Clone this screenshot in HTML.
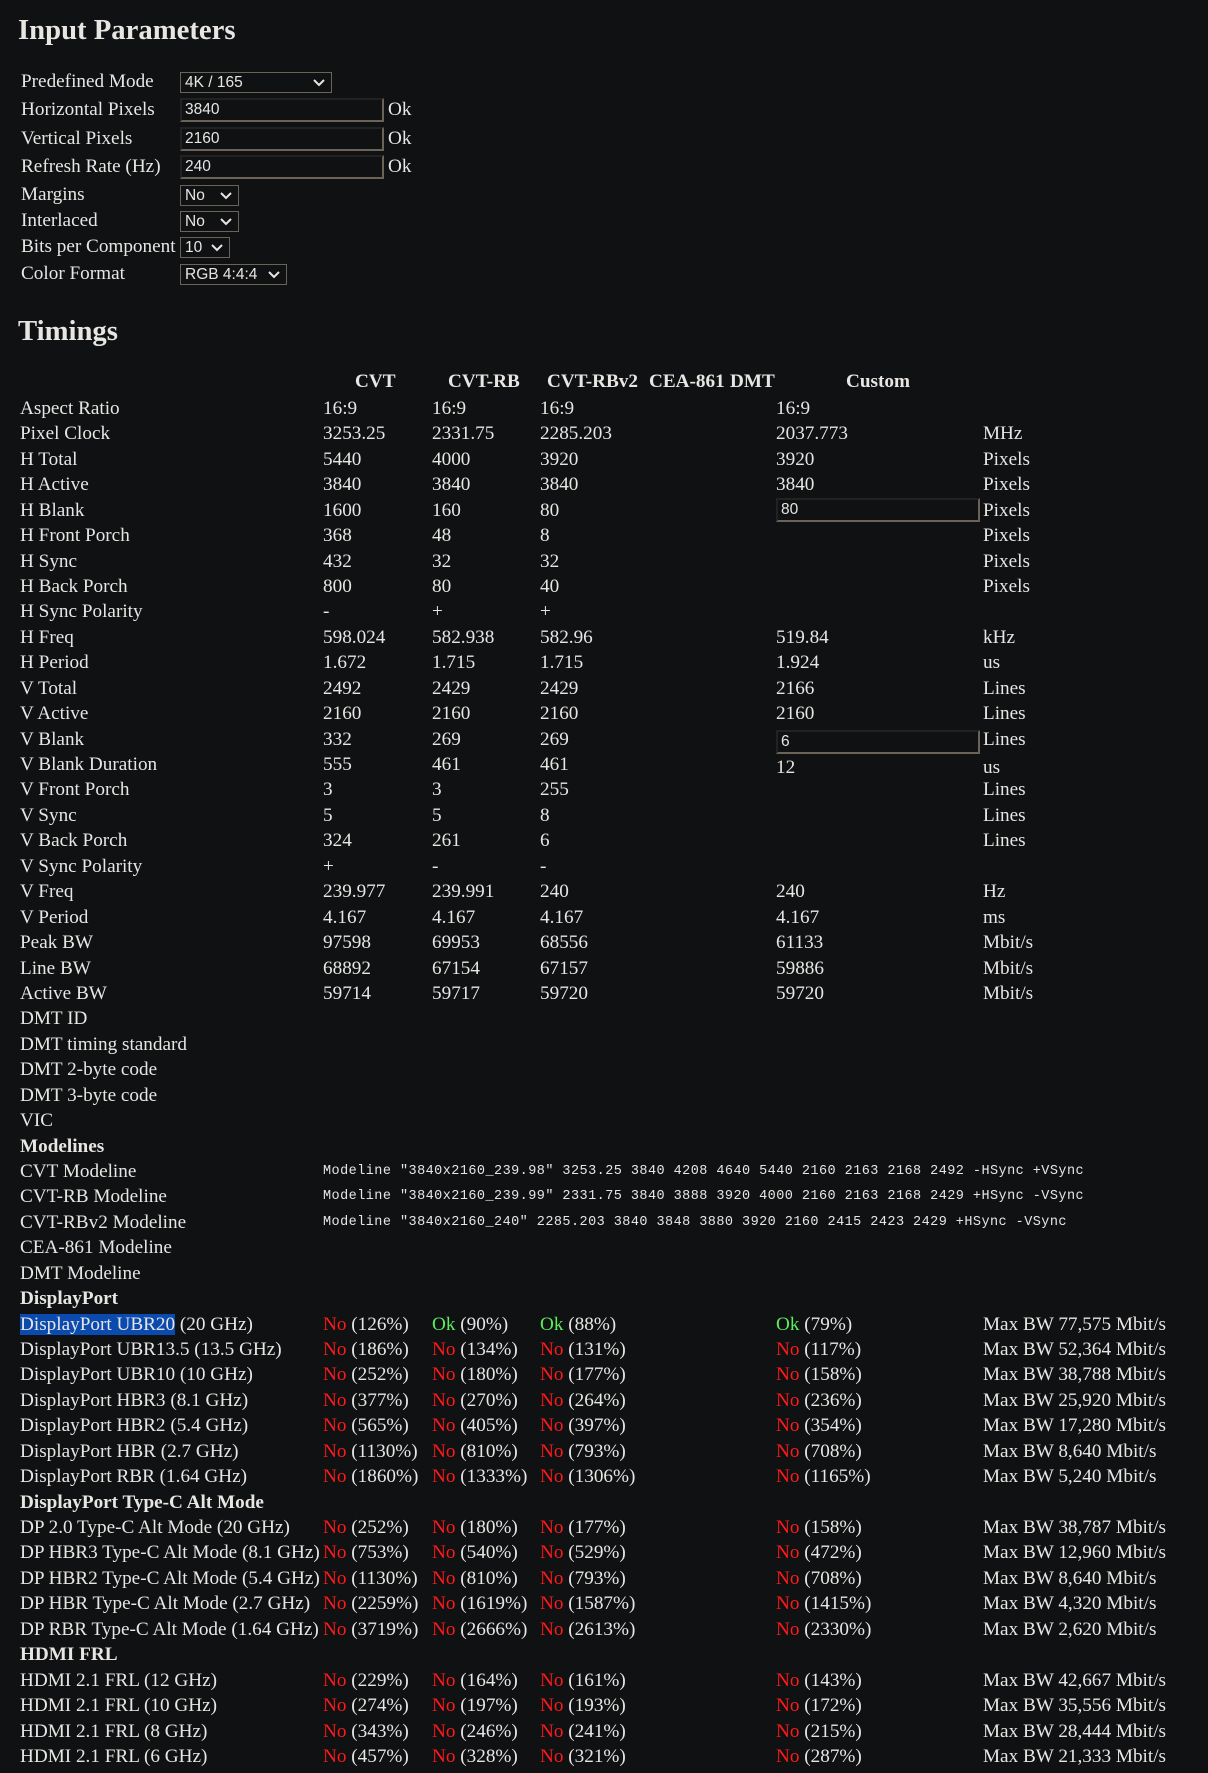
<!DOCTYPE html>
<html><head><meta charset="utf-8"><style>
html,body{margin:0;padding:0;background:#0f1113;}
body{width:1208px;height:1773px;position:relative;overflow:hidden;color:#e8e6e3;font-family:"Liberation Serif",serif;font-size:19.2px;}
.a{position:absolute;white-space:nowrap;line-height:24px;height:24px;}
h1{position:absolute;margin:0;font-size:28.7px;font-weight:bold;line-height:34px;white-space:nowrap;}
.sel{position:absolute;border:1px solid #6b6358;box-sizing:border-box;height:21px;font-family:"Liberation Sans",sans-serif;font-size:15.5px;line-height:19px;padding-left:4px;}
.sel svg{position:absolute;right:6px;top:6px;}
.inp{position:absolute;box-sizing:border-box;height:24px;border:2px solid;border-color:#222 #6b6358 #6b6358 #222;font-family:"Liberation Sans",sans-serif;font-size:15.5px;line-height:20px;padding-left:3px;}
.mono{font-family:"Liberation Mono",monospace;font-size:13.5px;letter-spacing:0.45px;}
.r{color:#ff1a1a}.g{color:#5bef5b}
b{font-weight:bold}
.hl{background:#0b4bb0}
</style></head><body>
<h1 style="left:18px;top:13px">Input Parameters</h1>
<div class="a" style="left:21px;top:70px">Predefined Mode</div>
<div class="sel" style="left:180px;top:72px;width:152px">4K / 165<svg width="12" height="8"><path d="M1 1l5 5 5-5" fill="none" stroke="#e8e6e3" stroke-width="2"/></svg></div>
<div class="a" style="left:21px;top:98px">Horizontal Pixels</div>
<div class="inp" style="left:180px;top:98px;width:204px">3840</div><div class="a" style="left:388px;top:98px">Ok</div>
<div class="a" style="left:21px;top:127px">Vertical Pixels</div>
<div class="inp" style="left:180px;top:127px;width:204px">2160</div><div class="a" style="left:388px;top:127px">Ok</div>
<div class="a" style="left:21px;top:155px">Refresh Rate (Hz)</div>
<div class="inp" style="left:180px;top:155px;width:204px">240</div><div class="a" style="left:388px;top:155px">Ok</div>
<div class="a" style="left:21px;top:183px">Margins</div>
<div class="sel" style="left:180px;top:185px;width:59px">No<svg width="12" height="8"><path d="M1 1l5 5 5-5" fill="none" stroke="#e8e6e3" stroke-width="2"/></svg></div>
<div class="a" style="left:21px;top:209px">Interlaced</div>
<div class="sel" style="left:180px;top:211px;width:59px">No<svg width="12" height="8"><path d="M1 1l5 5 5-5" fill="none" stroke="#e8e6e3" stroke-width="2"/></svg></div>
<div class="a" style="left:21px;top:235px">Bits per Component</div>
<div class="sel" style="left:180px;top:237px;width:50px">10<svg width="12" height="8"><path d="M1 1l5 5 5-5" fill="none" stroke="#e8e6e3" stroke-width="2"/></svg></div>
<div class="a" style="left:21px;top:262px">Color Format</div>
<div class="sel" style="left:180px;top:264px;width:107px">RGB 4:4:4<svg width="12" height="8"><path d="M1 1l5 5 5-5" fill="none" stroke="#e8e6e3" stroke-width="2"/></svg></div>

<h1 style="left:18px;top:314px">Timings</h1>
<div class="a" style="top:370px;left:355px"><b>CVT</b></div>
<div class="a" style="top:370px;left:448px"><b>CVT-RB</b></div>
<div class="a" style="top:370px;left:547px"><b>CVT-RBv2</b></div>
<div class="a" style="top:370px;left:649px"><b>CEA-861</b></div>
<div class="a" style="top:370px;left:730px"><b>DMT</b></div>
<div class="a" style="top:370px;left:846px"><b>Custom</b></div>

<div class="a" style="top:397px;left:20px">Aspect Ratio</div><div class="a" style="top:397px;left:323px">16:9</div><div class="a" style="top:397px;left:432px">16:9</div><div class="a" style="top:397px;left:540px">16:9</div><div class="a" style="top:397px;left:776px">16:9</div>
<div class="a" style="top:422px;left:20px">Pixel Clock</div><div class="a" style="top:422px;left:323px">3253.25</div><div class="a" style="top:422px;left:432px">2331.75</div><div class="a" style="top:422px;left:540px">2285.203</div><div class="a" style="top:422px;left:776px">2037.773</div><div class="a" style="top:422px;left:983px">MHz</div>
<div class="a" style="top:448px;left:20px">H Total</div><div class="a" style="top:448px;left:323px">5440</div><div class="a" style="top:448px;left:432px">4000</div><div class="a" style="top:448px;left:540px">3920</div><div class="a" style="top:448px;left:776px">3920</div><div class="a" style="top:448px;left:983px">Pixels</div>
<div class="a" style="top:473px;left:20px">H Active</div><div class="a" style="top:473px;left:323px">3840</div><div class="a" style="top:473px;left:432px">3840</div><div class="a" style="top:473px;left:540px">3840</div><div class="a" style="top:473px;left:776px">3840</div><div class="a" style="top:473px;left:983px">Pixels</div>
<div class="a" style="top:499px;left:20px">H Blank</div><div class="a" style="top:499px;left:323px">1600</div><div class="a" style="top:499px;left:432px">160</div><div class="a" style="top:499px;left:540px">80</div><div class="inp" style="top:498px;left:776px;width:204px">80</div><div class="a" style="top:499px;left:983px">Pixels</div>
<div class="a" style="top:524px;left:20px">H Front Porch</div><div class="a" style="top:524px;left:323px">368</div><div class="a" style="top:524px;left:432px">48</div><div class="a" style="top:524px;left:540px">8</div><div class="a" style="top:524px;left:983px">Pixels</div>
<div class="a" style="top:550px;left:20px">H Sync</div><div class="a" style="top:550px;left:323px">432</div><div class="a" style="top:550px;left:432px">32</div><div class="a" style="top:550px;left:540px">32</div><div class="a" style="top:550px;left:983px">Pixels</div>
<div class="a" style="top:575px;left:20px">H Back Porch</div><div class="a" style="top:575px;left:323px">800</div><div class="a" style="top:575px;left:432px">80</div><div class="a" style="top:575px;left:540px">40</div><div class="a" style="top:575px;left:983px">Pixels</div>
<div class="a" style="top:600px;left:20px">H Sync Polarity</div><div class="a" style="top:600px;left:323px">-</div><div class="a" style="top:600px;left:432px">+</div><div class="a" style="top:600px;left:540px">+</div>
<div class="a" style="top:626px;left:20px">H Freq</div><div class="a" style="top:626px;left:323px">598.024</div><div class="a" style="top:626px;left:432px">582.938</div><div class="a" style="top:626px;left:540px">582.96</div><div class="a" style="top:626px;left:776px">519.84</div><div class="a" style="top:626px;left:983px">kHz</div>
<div class="a" style="top:651px;left:20px">H Period</div><div class="a" style="top:651px;left:323px">1.672</div><div class="a" style="top:651px;left:432px">1.715</div><div class="a" style="top:651px;left:540px">1.715</div><div class="a" style="top:651px;left:776px">1.924</div><div class="a" style="top:651px;left:983px">us</div>
<div class="a" style="top:677px;left:20px">V Total</div><div class="a" style="top:677px;left:323px">2492</div><div class="a" style="top:677px;left:432px">2429</div><div class="a" style="top:677px;left:540px">2429</div><div class="a" style="top:677px;left:776px">2166</div><div class="a" style="top:677px;left:983px">Lines</div>
<div class="a" style="top:702px;left:20px">V Active</div><div class="a" style="top:702px;left:323px">2160</div><div class="a" style="top:702px;left:432px">2160</div><div class="a" style="top:702px;left:540px">2160</div><div class="a" style="top:702px;left:776px">2160</div><div class="a" style="top:702px;left:983px">Lines</div>
<div class="a" style="top:728px;left:20px">V Blank</div><div class="a" style="top:728px;left:323px">332</div><div class="a" style="top:728px;left:432px">269</div><div class="a" style="top:728px;left:540px">269</div><div class="inp" style="top:730px;left:776px;width:204px">6</div><div class="a" style="top:728px;left:983px">Lines</div>
<div class="a" style="top:753px;left:20px">V Blank Duration</div><div class="a" style="top:753px;left:323px">555</div><div class="a" style="top:753px;left:432px">461</div><div class="a" style="top:753px;left:540px">461</div><div class="a" style="top:756px;left:776px">12</div><div class="a" style="top:756px;left:983px">us</div>
<div class="a" style="top:778px;left:20px">V Front Porch</div><div class="a" style="top:778px;left:323px">3</div><div class="a" style="top:778px;left:432px">3</div><div class="a" style="top:778px;left:540px">255</div><div class="a" style="top:778px;left:983px">Lines</div>
<div class="a" style="top:804px;left:20px">V Sync</div><div class="a" style="top:804px;left:323px">5</div><div class="a" style="top:804px;left:432px">5</div><div class="a" style="top:804px;left:540px">8</div><div class="a" style="top:804px;left:983px">Lines</div>
<div class="a" style="top:829px;left:20px">V Back Porch</div><div class="a" style="top:829px;left:323px">324</div><div class="a" style="top:829px;left:432px">261</div><div class="a" style="top:829px;left:540px">6</div><div class="a" style="top:829px;left:983px">Lines</div>
<div class="a" style="top:855px;left:20px">V Sync Polarity</div><div class="a" style="top:855px;left:323px">+</div><div class="a" style="top:855px;left:432px">-</div><div class="a" style="top:855px;left:540px">-</div>
<div class="a" style="top:880px;left:20px">V Freq</div><div class="a" style="top:880px;left:323px">239.977</div><div class="a" style="top:880px;left:432px">239.991</div><div class="a" style="top:880px;left:540px">240</div><div class="a" style="top:880px;left:776px">240</div><div class="a" style="top:880px;left:983px">Hz</div>
<div class="a" style="top:906px;left:20px">V Period</div><div class="a" style="top:906px;left:323px">4.167</div><div class="a" style="top:906px;left:432px">4.167</div><div class="a" style="top:906px;left:540px">4.167</div><div class="a" style="top:906px;left:776px">4.167</div><div class="a" style="top:906px;left:983px">ms</div>
<div class="a" style="top:931px;left:20px">Peak BW</div><div class="a" style="top:931px;left:323px">97598</div><div class="a" style="top:931px;left:432px">69953</div><div class="a" style="top:931px;left:540px">68556</div><div class="a" style="top:931px;left:776px">61133</div><div class="a" style="top:931px;left:983px">Mbit/s</div>
<div class="a" style="top:957px;left:20px">Line BW</div><div class="a" style="top:957px;left:323px">68892</div><div class="a" style="top:957px;left:432px">67154</div><div class="a" style="top:957px;left:540px">67157</div><div class="a" style="top:957px;left:776px">59886</div><div class="a" style="top:957px;left:983px">Mbit/s</div>
<div class="a" style="top:982px;left:20px">Active BW</div><div class="a" style="top:982px;left:323px">59714</div><div class="a" style="top:982px;left:432px">59717</div><div class="a" style="top:982px;left:540px">59720</div><div class="a" style="top:982px;left:776px">59720</div><div class="a" style="top:982px;left:983px">Mbit/s</div>
<div class="a" style="top:1007px;left:20px">DMT ID</div>
<div class="a" style="top:1033px;left:20px">DMT timing standard</div>
<div class="a" style="top:1058px;left:20px">DMT 2-byte code</div>
<div class="a" style="top:1084px;left:20px">DMT 3-byte code</div>
<div class="a" style="top:1109px;left:20px">VIC</div>
<div class="a" style="top:1135px;left:20px"><b>Modelines</b></div>
<div class="a" style="top:1160px;left:20px">CVT Modeline</div><div class="a mono" style="top:1160px;left:323px">Modeline "3840x2160_239.98" 3253.25 3840 4208 4640 5440 2160 2163 2168 2492 -HSync +VSync</div>
<div class="a" style="top:1185px;left:20px">CVT-RB Modeline</div><div class="a mono" style="top:1185px;left:323px">Modeline "3840x2160_239.99" 2331.75 3840 3888 3920 4000 2160 2163 2168 2429 +HSync -VSync</div>
<div class="a" style="top:1211px;left:20px">CVT-RBv2 Modeline</div><div class="a mono" style="top:1211px;left:323px">Modeline "3840x2160_240" 2285.203 3840 3848 3880 3920 2160 2415 2423 2429 +HSync -VSync</div>
<div class="a" style="top:1236px;left:20px">CEA-861 Modeline</div>
<div class="a" style="top:1262px;left:20px">DMT Modeline</div>
<div class="a" style="top:1287px;left:20px"><b>DisplayPort</b></div>
<div class="a" style="top:1313px;left:20px"><span class="hl">DisplayPort UBR20</span> (20 GHz)</div><div class="a" style="top:1313px;left:323px"><span class="r">No</span> (126%)</div><div class="a" style="top:1313px;left:432px"><span class="g">Ok</span> (90%)</div><div class="a" style="top:1313px;left:540px"><span class="g">Ok</span> (88%)</div><div class="a" style="top:1313px;left:776px"><span class="g">Ok</span> (79%)</div><div class="a" style="top:1313px;left:983px">Max BW 77,575 Mbit/s</div>
<div class="a" style="top:1338px;left:20px">DisplayPort UBR13.5 (13.5 GHz)</div><div class="a" style="top:1338px;left:323px"><span class="r">No</span> (186%)</div><div class="a" style="top:1338px;left:432px"><span class="r">No</span> (134%)</div><div class="a" style="top:1338px;left:540px"><span class="r">No</span> (131%)</div><div class="a" style="top:1338px;left:776px"><span class="r">No</span> (117%)</div><div class="a" style="top:1338px;left:983px">Max BW 52,364 Mbit/s</div>
<div class="a" style="top:1363px;left:20px">DisplayPort UBR10 (10 GHz)</div><div class="a" style="top:1363px;left:323px"><span class="r">No</span> (252%)</div><div class="a" style="top:1363px;left:432px"><span class="r">No</span> (180%)</div><div class="a" style="top:1363px;left:540px"><span class="r">No</span> (177%)</div><div class="a" style="top:1363px;left:776px"><span class="r">No</span> (158%)</div><div class="a" style="top:1363px;left:983px">Max BW 38,788 Mbit/s</div>
<div class="a" style="top:1389px;left:20px">DisplayPort HBR3 (8.1 GHz)</div><div class="a" style="top:1389px;left:323px"><span class="r">No</span> (377%)</div><div class="a" style="top:1389px;left:432px"><span class="r">No</span> (270%)</div><div class="a" style="top:1389px;left:540px"><span class="r">No</span> (264%)</div><div class="a" style="top:1389px;left:776px"><span class="r">No</span> (236%)</div><div class="a" style="top:1389px;left:983px">Max BW 25,920 Mbit/s</div>
<div class="a" style="top:1414px;left:20px">DisplayPort HBR2 (5.4 GHz)</div><div class="a" style="top:1414px;left:323px"><span class="r">No</span> (565%)</div><div class="a" style="top:1414px;left:432px"><span class="r">No</span> (405%)</div><div class="a" style="top:1414px;left:540px"><span class="r">No</span> (397%)</div><div class="a" style="top:1414px;left:776px"><span class="r">No</span> (354%)</div><div class="a" style="top:1414px;left:983px">Max BW 17,280 Mbit/s</div>
<div class="a" style="top:1440px;left:20px">DisplayPort HBR (2.7 GHz)</div><div class="a" style="top:1440px;left:323px"><span class="r">No</span> (1130%)</div><div class="a" style="top:1440px;left:432px"><span class="r">No</span> (810%)</div><div class="a" style="top:1440px;left:540px"><span class="r">No</span> (793%)</div><div class="a" style="top:1440px;left:776px"><span class="r">No</span> (708%)</div><div class="a" style="top:1440px;left:983px">Max BW 8,640 Mbit/s</div>
<div class="a" style="top:1465px;left:20px">DisplayPort RBR (1.64 GHz)</div><div class="a" style="top:1465px;left:323px"><span class="r">No</span> (1860%)</div><div class="a" style="top:1465px;left:432px"><span class="r">No</span> (1333%)</div><div class="a" style="top:1465px;left:540px"><span class="r">No</span> (1306%)</div><div class="a" style="top:1465px;left:776px"><span class="r">No</span> (1165%)</div><div class="a" style="top:1465px;left:983px">Max BW 5,240 Mbit/s</div>
<div class="a" style="top:1491px;left:20px"><b>DisplayPort Type-C Alt Mode</b></div>
<div class="a" style="top:1516px;left:20px">DP 2.0 Type-C Alt Mode (20 GHz)</div><div class="a" style="top:1516px;left:323px"><span class="r">No</span> (252%)</div><div class="a" style="top:1516px;left:432px"><span class="r">No</span> (180%)</div><div class="a" style="top:1516px;left:540px"><span class="r">No</span> (177%)</div><div class="a" style="top:1516px;left:776px"><span class="r">No</span> (158%)</div><div class="a" style="top:1516px;left:983px">Max BW 38,787 Mbit/s</div>
<div class="a" style="top:1541px;left:20px">DP HBR3 Type-C Alt Mode (8.1 GHz)</div><div class="a" style="top:1541px;left:323px"><span class="r">No</span> (753%)</div><div class="a" style="top:1541px;left:432px"><span class="r">No</span> (540%)</div><div class="a" style="top:1541px;left:540px"><span class="r">No</span> (529%)</div><div class="a" style="top:1541px;left:776px"><span class="r">No</span> (472%)</div><div class="a" style="top:1541px;left:983px">Max BW 12,960 Mbit/s</div>
<div class="a" style="top:1567px;left:20px">DP HBR2 Type-C Alt Mode (5.4 GHz)</div><div class="a" style="top:1567px;left:323px"><span class="r">No</span> (1130%)</div><div class="a" style="top:1567px;left:432px"><span class="r">No</span> (810%)</div><div class="a" style="top:1567px;left:540px"><span class="r">No</span> (793%)</div><div class="a" style="top:1567px;left:776px"><span class="r">No</span> (708%)</div><div class="a" style="top:1567px;left:983px">Max BW 8,640 Mbit/s</div>
<div class="a" style="top:1592px;left:20px">DP HBR Type-C Alt Mode (2.7 GHz)</div><div class="a" style="top:1592px;left:323px"><span class="r">No</span> (2259%)</div><div class="a" style="top:1592px;left:432px"><span class="r">No</span> (1619%)</div><div class="a" style="top:1592px;left:540px"><span class="r">No</span> (1587%)</div><div class="a" style="top:1592px;left:776px"><span class="r">No</span> (1415%)</div><div class="a" style="top:1592px;left:983px">Max BW 4,320 Mbit/s</div>
<div class="a" style="top:1618px;left:20px">DP RBR Type-C Alt Mode (1.64 GHz)</div><div class="a" style="top:1618px;left:323px"><span class="r">No</span> (3719%)</div><div class="a" style="top:1618px;left:432px"><span class="r">No</span> (2666%)</div><div class="a" style="top:1618px;left:540px"><span class="r">No</span> (2613%)</div><div class="a" style="top:1618px;left:776px"><span class="r">No</span> (2330%)</div><div class="a" style="top:1618px;left:983px">Max BW 2,620 Mbit/s</div>
<div class="a" style="top:1643px;left:20px"><b>HDMI FRL</b></div>
<div class="a" style="top:1669px;left:20px">HDMI 2.1 FRL (12 GHz)</div><div class="a" style="top:1669px;left:323px"><span class="r">No</span> (229%)</div><div class="a" style="top:1669px;left:432px"><span class="r">No</span> (164%)</div><div class="a" style="top:1669px;left:540px"><span class="r">No</span> (161%)</div><div class="a" style="top:1669px;left:776px"><span class="r">No</span> (143%)</div><div class="a" style="top:1669px;left:983px">Max BW 42,667 Mbit/s</div>
<div class="a" style="top:1694px;left:20px">HDMI 2.1 FRL (10 GHz)</div><div class="a" style="top:1694px;left:323px"><span class="r">No</span> (274%)</div><div class="a" style="top:1694px;left:432px"><span class="r">No</span> (197%)</div><div class="a" style="top:1694px;left:540px"><span class="r">No</span> (193%)</div><div class="a" style="top:1694px;left:776px"><span class="r">No</span> (172%)</div><div class="a" style="top:1694px;left:983px">Max BW 35,556 Mbit/s</div>
<div class="a" style="top:1720px;left:20px">HDMI 2.1 FRL (8 GHz)</div><div class="a" style="top:1720px;left:323px"><span class="r">No</span> (343%)</div><div class="a" style="top:1720px;left:432px"><span class="r">No</span> (246%)</div><div class="a" style="top:1720px;left:540px"><span class="r">No</span> (241%)</div><div class="a" style="top:1720px;left:776px"><span class="r">No</span> (215%)</div><div class="a" style="top:1720px;left:983px">Max BW 28,444 Mbit/s</div>
<div class="a" style="top:1745px;left:20px">HDMI 2.1 FRL (6 GHz)</div><div class="a" style="top:1745px;left:323px"><span class="r">No</span> (457%)</div><div class="a" style="top:1745px;left:432px"><span class="r">No</span> (328%)</div><div class="a" style="top:1745px;left:540px"><span class="r">No</span> (321%)</div><div class="a" style="top:1745px;left:776px"><span class="r">No</span> (287%)</div><div class="a" style="top:1745px;left:983px">Max BW 21,333 Mbit/s</div>
</body></html>
